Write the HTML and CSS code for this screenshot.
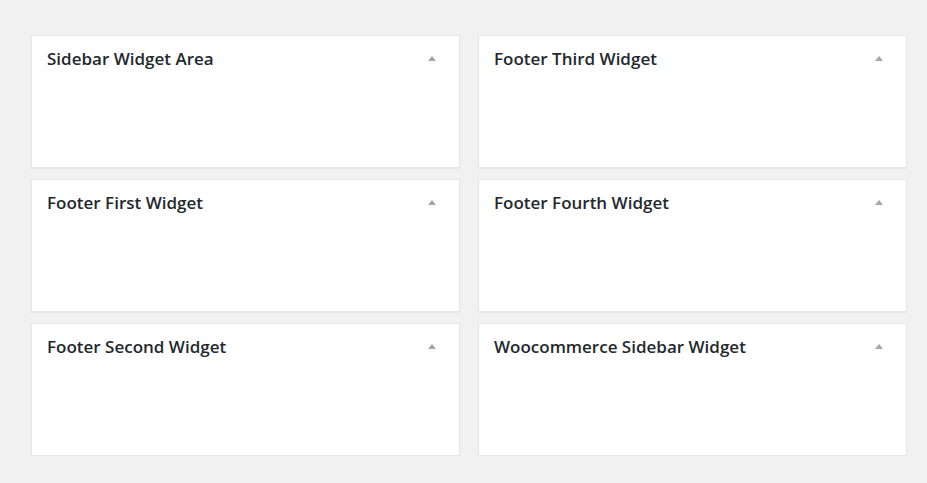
FILE: index.html
```html
<!DOCTYPE html>
<html>
<head>
<meta charset="utf-8">
<link rel="stylesheet" href="styles.css">
</head>
<body>
<div class="areas">
  <div class="col">
    <div class="box"><h2 class="title">Sidebar Widget Area</h2><span class="arrow"></span></div>
    <div class="box"><h2 class="title">Footer First Widget</h2><span class="arrow"></span></div>
    <div class="box"><h2 class="title">Footer Second Widget</h2><span class="arrow"></span></div>
  </div>
  <div class="col">
    <div class="box"><h2 class="title">Footer Third Widget</h2><span class="arrow"></span></div>
    <div class="box"><h2 class="title">Footer Fourth Widget</h2><span class="arrow"></span></div>
    <div class="box"><h2 class="title">Woocommerce Sidebar Widget</h2><span class="arrow"></span></div>
  </div>
</div>
</body>
</html>
```
FILE: styles.css
```css
html, body {
  margin: 0;
  padding: 0;
  background: #f1f1f1;
  font-family: "Open Sans", "Liberation Sans", sans-serif;
}
.areas {
  display: flex;
  gap: 18px;
  padding: 35px 0 0 31px;
}
.col {
  display: flex;
  flex-direction: column;
  gap: 11px;
  width: 429px;
}
.box {
  position: relative;
  box-sizing: border-box;
  height: 133px;
  background: #fff;
  border: 1px solid #e5e5e5;
  box-shadow: 0 1px 1px rgba(0,0,0,0.04);
  display: flex;
  justify-content: space-between;
  align-items: flex-start;
  padding: 11px 23px 0 15px;
}
.title {
  margin: 0;
  font-size: 17px;
  font-weight: 600;
  line-height: 24px;
  color: #23282d;
}
.arrow {
  width: 0;
  height: 0;
  margin-top: 9px;
  border-left: 4px solid transparent;
  border-right: 4px solid transparent;
  border-bottom: 5px solid #a0a5aa;
}
```
